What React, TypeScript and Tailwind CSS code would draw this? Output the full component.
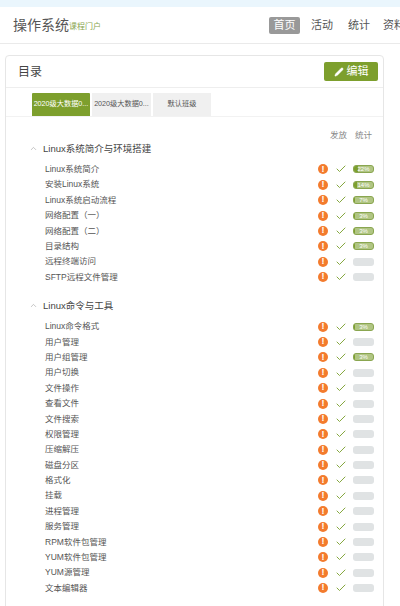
import React from 'react';
import { Pencil, ChevronUp, Check } from 'lucide-react';

const sections = [
  {
    title: 'Linux系统简介与环境搭建',
    items: [
      ['Linux系统简介', '22%'],
      ['安装Linux系统', '14%'],
      ['Linux系统启动流程', '7%'],
      ['网络配置（一）', '3%'],
      ['网络配置（二）', '3%'],
      ['目录结构', '3%'],
      ['远程终端访问', ''],
      ['SFTP远程文件管理', ''],
    ],
  },
  {
    title: 'Linux命令与工具',
    items: [
      ['Linux命令格式', '3%'],
      ['用户管理', ''],
      ['用户组管理', '3%'],
      ['用户切换', ''],
      ['文件操作', ''],
      ['查看文件', ''],
      ['文件搜索', ''],
      ['权限管理', ''],
      ['压缩解压', ''],
      ['磁盘分区', ''],
      ['格式化', ''],
      ['挂载', ''],
      ['进程管理', ''],
      ['服务管理', ''],
      ['RPM软件包管理', ''],
      ['YUM软件包管理', ''],
      ['YUM源管理', ''],
      ['文本编辑器', ''],
    ],
  },
];

const Row = ({ name, pct }: { name: string; pct: string }) => (
  <div className="flex items-center h-[15.4px] pl-[39px] pr-[9px]">
    <span className="flex-1 text-[8.5px] text-[#555]">{name}</span>
    <span className="w-[10px] h-[10px] rounded-full bg-[#f37b2d] text-white text-[9px] font-bold flex items-center justify-center">!</span>
    <Check className="w-[12px] h-[12px] text-[#86a83f] ml-[7px]" strokeWidth={2} />
    {pct ? (
      <span className="relative overflow-hidden w-[21px] h-[8px] ml-[6px] rounded-[3px] bg-[#b0c583] border border-[#8aa650] text-white text-[6px] leading-none flex items-center justify-center">
        {/* bar fill, width from the percentage */}
        <span className="absolute left-0 top-0 bottom-0 bg-[#7d9f2d]" style={{ width: pct }} />
        <span className="relative">{pct}</span>
      </span>
    ) : (
      <span className="w-[21px] h-[8px] ml-[6px] rounded-[3px] bg-[#e0e3e4]" />
    )}
  </div>
);

export default function App() {
  return (
    <div className="h-[606px] w-[400px] overflow-hidden bg-white font-['Liberation_Sans','Noto_Sans_CJK_SC',sans-serif]">
      <div className="h-[7px] bg-[#eaf6fd]" />

      {/* top nav */}
      <div className="h-[37px] flex items-center border-b border-[#eaeaea] pl-[13px] whitespace-nowrap">
        <span className="text-[14px] text-[#555]">操作系统</span>
        <span className="text-[8px] text-[#8aa650] mt-[4px]">课程门户</span>
        <div className="ml-auto flex items-center shrink-0 text-[11px] text-[#555] mr-[-5px]">
          <span className="bg-[#999] text-white rounded-[2px] h-[17px] w-[31px] flex items-center justify-center">首页</span>
          <span className="ml-[11px]">活动</span>
          <span className="ml-[15px]">统计</span>
          <span className="ml-[13px]">资料</span>
        </div>
      </div>

      {/* card */}
      <div className="mt-[11px] ml-[5px] w-[379px] border border-[#e6e6e6] rounded-t-[4px] pb-[30px]">
        <div className="h-[32px] flex items-center justify-between border-b border-[#eee] pl-[12px] pr-[5px]">
          <span className="text-[12px] text-[#444]">目录</span>
          <span className="w-[54px] h-[19px] rounded-[2px] bg-[#7d9f2d] text-white text-[11px] flex items-center justify-center gap-[3px]">
            <Pencil className="w-[10px] h-[10px]" fill="currentColor" strokeWidth={1} />
            编辑
          </span>
        </div>

        <div className="h-[29px] flex items-end gap-[1px] pl-[26px] border-b border-[#f2f2f2] text-[7.2px] whitespace-nowrap">
          <span className="w-[58px] h-[23px] bg-[#7d9f2d] text-white rounded-t-[1px] flex items-center justify-center">2020级大数据0...</span>
          <span className="w-[59px] h-[23px] ml-[1px] bg-[#f0f0f0] text-[#555] flex items-center justify-center">2020级大数据0...</span>
          <span className="w-[58px] h-[23px] ml-[1px] bg-[#f0f0f0] text-[#555] flex items-center justify-center">默认班级</span>
        </div>

        <div className="flex justify-end gap-[8px] pr-[11px] pt-[12px] text-[8.5px] text-[#888]">
          <span>发放</span>
          <span>统计</span>
        </div>

        {sections.map((s, i) => (
          <div key={s.title} className={i === 0 ? '-mt-[1px]' : 'mt-[13px]'}>
            <div className="h-[16px] flex items-center pl-[23px] mb-[5px]">
              <ChevronUp className="w-[9px] h-[9px] text-[#999]" strokeWidth={1.5} />
              <span className="ml-[5px] text-[9.5px] text-[#444]">{s.title}</span>
            </div>
            {s.items.map(([name, pct]) => (
              <Row key={name} name={name} pct={pct} />
            ))}
          </div>
        ))}
      </div>
    </div>
  );
}
